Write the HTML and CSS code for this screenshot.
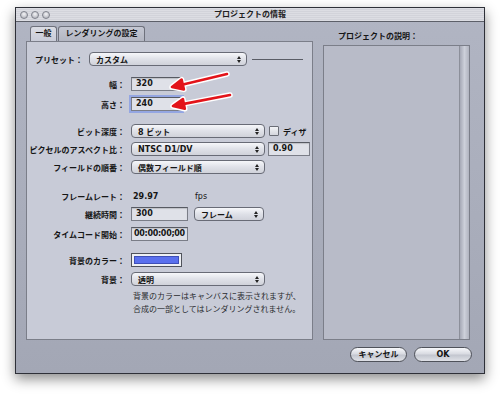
FILE: index.html
```html
<!DOCTYPE html>
<html lang="ja">
<head>
  <meta charset="UTF-8" />
  <title>プロジェクトの情報</title>
  <link rel="stylesheet" href="styles.css">
</head>
<body>
  <div class="window">
    <div class="titlebar">
      <div class="lights"><span></span><span></span><span></span></div>
      <div class="title">プロジェクトの情報</div>
    </div>

    <div class="content">
      <div class="left">
        <div class="tabs">
          <div class="tab active">一般</div>
          <div class="tab second">レンダリングの設定</div>
        </div>
        <div class="panel">
          <div class="row preset">
            <span class="plabel">プリセット：</span>
            <div class="popup w-preset">カスタム<span class="arrows"></span></div>
            <span class="rule"></span>
          </div>

          <div class="row mt11">
            <span class="label">幅：</span>
            <div class="field w50">320</div>
          </div>
          <div class="row mt6">
            <span class="label">高さ：</span>
            <div class="field w50 focus">240</div>
          </div>

          <div class="row mt13">
            <span class="label">ビット深度：</span>
            <div class="popup w-wide">8 ビット<span class="arrows"></span></div>
            <span class="check"></span><span class="check-text">ディザ</span>
          </div>
          <div class="row">
            <span class="label">ピクセルのアスペクト比：</span>
            <div class="popup w-wide">NTSC D1/DV<span class="arrows"></span></div>
            <div class="field w42 ml3">0.90</div>
          </div>
          <div class="row">
            <span class="label">フィールドの順番：</span>
            <div class="popup w-wide">偶数フィールド順<span class="arrows"></span></div>
          </div>

          <div class="row mt15">
            <span class="label">フレームレート：</span>
            <span class="value">29.97</span>
            <span class="unit">fps</span>
          </div>
          <div class="row">
            <span class="label">継続時間：</span>
            <div class="field w57">300</div>
            <div class="popup w-short ml6">フレーム<span class="arrows"></span></div>
          </div>
          <div class="row mt6">
            <span class="label">タイムコード開始：</span>
            <div class="field w57 tight">00:00:00;00</div>
          </div>

          <div class="row mt12">
            <span class="label">背景のカラー：</span>
            <div class="swatch"><span></span></div>
          </div>
          <div class="row mt5">
            <span class="label">背景：</span>
            <div class="popup w-wide">透明<span class="arrows"></span></div>
          </div>
          <p class="note">背景のカラーはキャンバスに表示されますが、<br>合成の一部としてはレンダリングされません。</p>
        </div>
      </div>

      <div class="right">
        <div class="desc-label">プロジェクトの説明：</div>
        <div class="desc"><div class="scroll"></div></div>
        <div class="buttons">
          <div class="btn cancel">キャンセル</div>
          <div class="btn ok">OK</div>
        </div>
      </div>
    </div>
  </div>

  <!-- red callout arrows drawn over the dialog -->
  <svg class="callouts" width="500" height="397" viewBox="0 0 500 397">
    <g stroke="#fff" stroke-width="5.5" stroke-linecap="round" stroke-linejoin="round" fill="#fff">
      <line x1="227" y1="74" x2="183" y2="84.5" />
      <polygon points="172,87 181.6,79.6 183.9,89.4" />
      <line x1="230" y1="95" x2="184" y2="103.9" />
      <polygon points="173,106 182.9,99 184.8,108.8" />
    </g>
    <g stroke="#e3141a" stroke-width="2.6" stroke-linecap="round" stroke-linejoin="round" fill="#e3141a">
      <line x1="227" y1="74" x2="183" y2="84.5" />
      <polygon points="172,87 181.6,79.6 183.9,89.4" />
      <line x1="230" y1="95" x2="184" y2="103.9" />
      <polygon points="173,106 182.9,99 184.8,108.8" />
    </g>
  </svg>
</body>
</html>
```

FILE: styles.css
```css
* {
  box-sizing: border-box;
}
body {
  margin: 0;
  width: 500px;
  height: 397px;
  overflow: hidden;
  position: relative;
  background-color: #fff;
  font-family: "DejaVu Sans", "Noto Sans CJK JP", sans-serif;
  font-size: 8px;
  color: #151515;
}
.window {
  margin: 7px 0 0 15px;
  width: 470px;
  height: 367px;
  border: 1px solid #2e3038;
  background: linear-gradient(#b1b5c3, #a3a7b5);
  box-shadow: 0 5px 12px rgba(0,0,0,0.45);
  display: flex;
  flex-direction: column;
}
.titlebar {
  height: 14px;
  border-bottom: 1px solid #5d6069;
  background: repeating-linear-gradient(#dcdde3 0 1px, #d2d3da 1px 2px);
  display: grid;
  grid-template-columns: 1fr auto 1fr;
  align-items: center;
}
.lights {
  display: flex;
  gap: 3px;
  padding-left: 4px;
}
.lights span {
  width: 8px;
  height: 8px;
  border-radius: 50%;
  border: 1px solid #80838d;
  background: radial-gradient(circle at 50% 35%, #f3f3f6, #a8aab3);
}
.title {
  font-weight: bold;
  color: #202020;
  line-height: 13px;
}
.content {
  display: flex;
  padding: 4px 14px 0 10px;
}
.left {
  width: 287px;
}
.tabs {
  display: flex;
  gap: 1px;
  padding-left: 4px;
  height: 15px;
}
.tab {
  height: 15px;
  border: 1px solid #6e717c;
  border-bottom: none;
  border-radius: 3px 3px 0 0;
  text-align: center;
  line-height: 14px;
  font-weight: bold;
  background: linear-gradient(#c4c7d2, #b3b6c2);
}
.tab.active {
  width: 27px;
  background: linear-gradient(#dadce4, #c9ccd8);
}
.tab.second {
  width: 87px;
}
.panel {
  height: 299px;
  border: 1px solid #7b7e89;
  background-color: #c8cbd7;
  padding-top: 10px;
}
.row {
  display: flex;
  align-items: center;
  height: 14px;
  margin-top: 4px;
  font-weight: bold;
}
.row.preset {
  margin-top: 0;
  padding-left: 8px;
}
.mt5 { margin-top: 5px; }
.mt6 { margin-top: 6px; }
.mt11 { margin-top: 11px; }
.mt12 { margin-top: 12px; }
.mt13 { margin-top: 13px; }
.mt15 { margin-top: 15px; }
.ml3 { margin-left: 3px; }
.ml6 { margin-left: 6px; }
.plabel {
  width: 54px;
  flex: none;
}
.label {
  width: 98px;
  margin-right: 6px;
  text-align: right;
  flex: none;
  white-space: nowrap;
}
.popup {
  display: flex;
  align-items: center;
  justify-content: space-between;
  height: 14px;
  padding: 0 5px 0 6px;
  border: 1px solid #686b76;
  border-radius: 4px;
  background: linear-gradient(#f6f7fa, #dfe1e8 50%, #d0d2da);
  flex: none;
}
.w-preset { width: 158px; }
.w-wide { width: 134px; }
.w-short { width: 70px; }
.arrows {
  display: flex;
  flex-direction: column;
  gap: 1px;
}
.arrows::before,
.arrows::after {
  content: "";
  width: 0;
  height: 0;
  border-left: 2px solid transparent;
  border-right: 2px solid transparent;
}
.arrows::before {
  border-bottom: 3px solid #222;
}
.arrows::after {
  border-top: 3px solid #222;
}
.rule {
  width: 51px;
  height: 1px;
  margin-left: 5px;
  background-color: #5a5d66;
}
.field {
  height: 14px;
  padding-left: 4px;
  line-height: 12px;
  border: 1px solid #7a7d87;
  border-top-color: #575a62;
  background-color: #dfe1e8;
  box-shadow: inset 0 1px 1px rgba(0,0,0,0.15);
  flex: none;
  white-space: nowrap;
  overflow: hidden;
}
.field.tight {
  padding-left: 2px;
  letter-spacing: -0.3px;
}
.field.focus {
  box-shadow: 0 0 0 2px #94a6e2;
}
.w50 { width: 51px; }
.w42 { width: 42px; }
.w57 { width: 57px; }
.check {
  width: 10px;
  height: 10px;
  margin-left: 4px;
  border: 1px solid #6a6d76;
  border-radius: 1px;
  background: linear-gradient(#f2f3f6, #d4d6dd);
}
.check-text {
  margin-left: 4px;
}
.value {
  width: 64px;
  padding-left: 2px;
}
.unit {
  font-weight: normal;
}
.swatch {
  width: 51px;
  height: 14px;
  padding: 2px;
  border: 1px solid #50535b;
  background-color: #eef0f4;
}
.swatch span {
  display: block;
  height: 100%;
  background-color: #5a70ee;
  border: 1px solid #3e4fb8;
}
.note {
  margin: 4px 0 0 106px;
  line-height: 13px;
  color: #2a2b30;
}
.right {
  width: 147px;
  margin-left: 10px;
  display: flex;
  flex-direction: column;
}
.desc-label {
  height: 19px;
  padding-left: 15px;
  line-height: 22px;
  font-weight: bold;
}
.desc {
  height: 295px;
  border: 1px solid #7b7e89;
  background-color: #b8bbc8;
  display: flex;
  justify-content: flex-end;
}
.scroll {
  width: 10px;
  border-left: 1px solid #8c8f9a;
  background: linear-gradient(90deg, #a6a9b6, #cdd0da 50%, #b0b3bf);
}
.buttons {
  display: flex;
  justify-content: flex-end;
  gap: 7px;
  margin: 7px -2px 0 0;
}
.btn {
  height: 15px;
  border: 1px solid #4f525a;
  border-radius: 8px;
  background: linear-gradient(#f7f8fb, #d9dbe2 45%, #c3c6cf 55%, #dfe1e7);
  text-align: center;
  line-height: 13px;
  font-weight: bold;
}
.btn.cancel { width: 57px; }
.btn.ok { width: 58px; }
.callouts {
  position: absolute;
  left: 0;
  top: 0;
  pointer-events: none;
}
```
